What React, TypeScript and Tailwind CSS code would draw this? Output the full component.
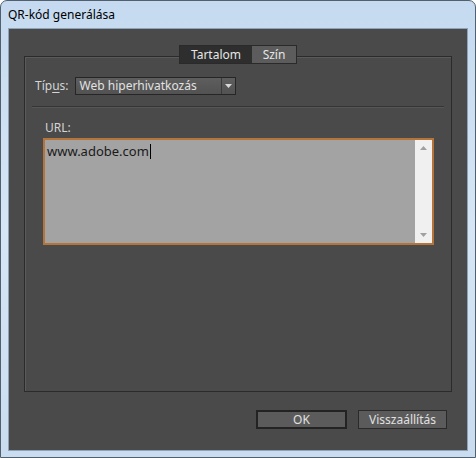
import React from 'react';

const uiFont = { fontFamily: '"Noto Sans", "Open Sans", "DejaVu Sans", sans-serif' };

export default function App() {
  return (
    <div
      className="flex h-[458px] w-[476px] flex-col overflow-hidden rounded-t-[7px] border border-[#52606e] bg-gradient-to-b from-[#c5daf0] via-[#d6e6f6] to-[#c9dcf0]"
      style={uiFont}
    >
      {/* title bar */}
      <div className="flex h-[27px] shrink-0 items-center px-[7px] text-[12px] text-black">
        QR-kód generálása
      </div>

      {/* client area */}
      <div className="mx-[7px] mb-[6px] flex flex-1 flex-col border border-[#8ea3b8] bg-[#4a4a4a]">
        <div className="relative mx-[15px] mt-[27px] h-[336px] border border-[#2b2b2b] shadow-[inset_1px_1px_0_#5a5a5a]">
          {/* tabs sit on the group border */}
          <div className="absolute left-1/2 top-[-12px] flex h-[19px] -translate-x-1/2 border border-[#2a2a2a] text-[12px]">
            <div className="flex w-[72px] items-center justify-center bg-[#2e2e2e] text-[#e6e6e6]">
              Tartalom
            </div>
            <div className="flex w-[44px] items-center justify-center bg-[#5c5c5c] text-[#e6e6e6]">
              Szín
            </div>
          </div>

          {/* type row */}
          <div className="mt-[20px] flex items-center pl-[10px] text-[12px] text-[#d4d4d4]">
            <span className="mr-[6px]">
              Típ<span className="underline underline-offset-2">u</span>s:
            </span>
            <div className="flex h-[18px] w-[161px] border border-[#262626] bg-gradient-to-b from-[#5e5e5e] to-[#525252]">
              <div className="flex flex-1 items-center pl-[4px] text-[#e2e2e2]">Web hiperhivatkozás</div>
              <div className="flex w-[14px] items-center justify-center border-l border-[#3a3a3a]">
                <svg width="7" height="4" viewBox="0 0 7 4">
                  <path d="M0 0h7L3.5 4z" fill="#d8d8d8" />
                </svg>
              </div>
            </div>
          </div>

          {/* separator */}
          <div className="mx-[7px] mt-[11px] h-[2px] border-t border-b border-t-[#353535] border-b-[#565656]" />

          {/* url */}
          <div className="ml-[20px] mt-[12px] text-[12px] leading-[16px] text-[#d4d4d4]">URL:</div>
          <div className="ml-[18px] mr-[17px] mt-[2px] flex h-[107px] border-2 border-[#b5743a] bg-[#a3a3a3]">
            <div className="flex-1 px-[2px] pt-[1px] text-[13px] leading-[17px] text-[#1a1a1a]">
              www.adobe.com<span className="ml-px inline-block h-[15px] w-px translate-y-[3px] bg-black" />
            </div>
            <div className="flex w-[17px] flex-col items-center justify-between bg-[#f0f0f0] py-[6px]">
              <svg width="7" height="4" viewBox="0 0 7 4">
                <path d="M3.5 0L7 4H0z" fill="#a0a0a0" />
              </svg>
              <svg width="7" height="4" viewBox="0 0 7 4">
                <path d="M0 0h7L3.5 4z" fill="#a0a0a0" />
              </svg>
            </div>
          </div>
        </div>

        {/* buttons */}
        <div className="mr-[20px] mt-[18px] flex justify-end gap-[11px] text-[12px] text-[#e0e0e0]">
          <button className="flex h-[19px] w-[91px] items-center justify-center border-2 border-[#232323] bg-[#5b5b5b]">
            OK
          </button>
          <button className="flex h-[19px] w-[89px] items-center justify-center border border-[#2a2a2a] bg-[#5b5b5b]">
            Visszaállítás
          </button>
        </div>
      </div>
    </div>
  );
}
